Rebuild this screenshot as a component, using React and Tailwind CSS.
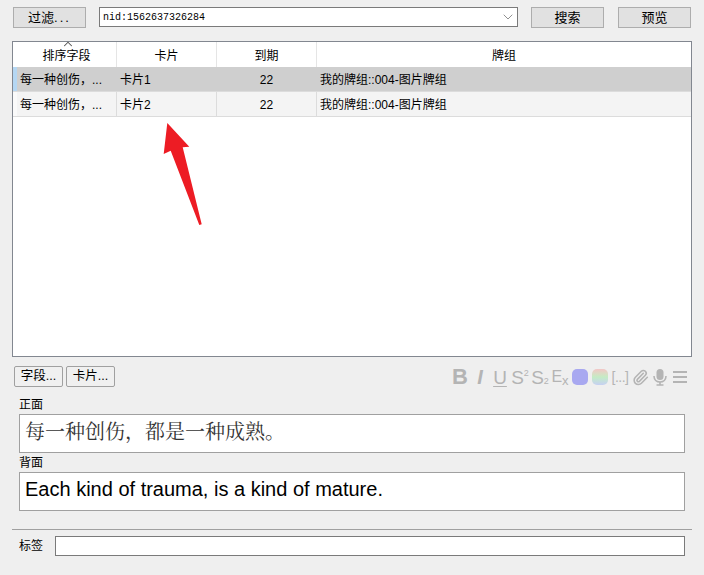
import React from "react";
import { ChevronDown, ChevronUp, Paperclip } from "lucide-react";

const rows = [
    { sort: "每一种创伤，...", card: "卡片1", due: "22", deck: "我的牌组::004-图片牌组", selected: true },
    { sort: "每一种创伤，...", card: "卡片2", due: "22", deck: "我的牌组::004-图片牌组", selected: false },
];

const TopButton = ({ children, className }) => (
    <button className={`h-[21px] border border-[#adadad] bg-[#e1e1e1] text-[13px] leading-[19px] text-black ${className}`}>
        {children}
    </button>
);

const SmallButton = ({ children }) => (
    <button className="h-[21px] w-[49px] rounded-[2px] border border-[#a0a0a0] bg-[#f0f0f0] text-[12.5px] leading-[19px] text-black">
        {children}
    </button>
);

const Cell = ({ children }) => (
    <div className="flex h-[20px] w-[20px] items-center justify-center">{children}</div>
);

const Toolbar = () => (
    <div className="mt-[2px] flex h-[20px] items-center font-['Liberation_Sans',sans-serif] text-[#b4b4b4]">
        <Cell><span className="text-[22px] leading-none font-bold">B</span></Cell>
        <Cell><span className="text-[20px] leading-none font-bold italic">I</span></Cell>
        <Cell><span className="text-[19px] leading-none underline underline-offset-2">U</span></Cell>
        <Cell>
            <span className="text-[19px] leading-none">S</span>
            <span className="mb-[8px] text-[9px] leading-none">2</span>
        </Cell>
        <Cell>
            <span className="text-[19px] leading-none">S</span>
            <span className="mt-[9px] text-[9px] leading-none">2</span>
        </Cell>
        <Cell>
            <span className="mb-[1px] text-[16px] leading-none">E</span>
            <span className="mt-[6px] text-[13px] leading-none">x</span>
        </Cell>
        <Cell><span className="h-[16px] w-[16px] rounded-[5px] bg-[#a8a8f0]"></span></Cell>
        <Cell><span className="h-[16px] w-[16px] rounded-[5px] bg-gradient-to-b from-[#f2c6c6] via-[#c4ecc4] to-[#c6d0f2]"></span></Cell>
        <Cell><span className="text-[14px] leading-none tracking-[-0.5px]">[...]</span></Cell>
        <Cell><Paperclip size={17} strokeWidth={2.2} /></Cell>
        <Cell>
            <svg width="14" height="18" viewBox="0 0 14 18" fill="none">
                <rect x="3.5" y="1" width="7" height="11" rx="3.5" fill="#b4b4b4" />
                <path d="M1 8c0 3.5 2.6 6 6 6s6-2.500 6-6" stroke="#b4b4b4" strokeWidth="1.6" />
                <path d="M7 14v3M3.500 17h7" stroke="#b4b4b4" strokeWidth="1.6" />
            </svg>
        </Cell>
        <Cell>
            <div className="flex w-[14px] flex-col gap-[3px]">
                <span className="h-[2px] bg-[#b4b4b4]"></span>
                <span className="h-[2px] bg-[#b4b4b4]"></span>
                <span className="h-[2px] bg-[#b4b4b4]"></span>
            </div>
        </Cell>
    </div>
);

const App = () => {
    return (
        <div className="relative flex h-[575px] w-[704px] flex-col overflow-hidden bg-[#efefef] px-[12px] pt-[7px] font-['Liberation_Sans','Noto_Sans_CJK_SC',sans-serif] text-black">
            <div className="flex items-start pl-[1px]">
                <TopButton className="w-[73px]">过滤<span className="tracking-[2px]">...</span></TopButton>
                <div className="ml-[13px] flex h-[20px] w-[419px] items-center justify-between border border-[#7a7a7a] bg-white pr-[1px] pl-[3px]">
                    <span className="pt-[1px] font-['Liberation_Mono','Noto_Sans_CJK_SC',monospace] text-[10px] leading-none">nid:1562637326284</span>
                    <ChevronDown size={16} strokeWidth={1.3} className="text-[#808080]" />
                </div>
                <TopButton className="ml-[13px] w-[73px]">搜索</TopButton>
                <TopButton className="ml-[14px] w-[73px]">预览</TopButton>
            </div>

            <div className="relative mt-[13px] flex h-[316px] w-[680px] flex-col border border-[#828790] bg-white">
                <div className="flex h-[25px] text-[12px]">
                    <div className="w-[4px] shrink-0"></div>
                    <div className="relative flex w-[100px] items-center justify-center border-r border-[#e5e5e5] pt-[2px]">
                        排序字段
                        <ChevronUp size={14} strokeWidth={1.8} className="absolute -top-[5px] left-[44px] text-[#505050]" />
                    </div>
                    <div className="flex w-[100px] items-center justify-center border-r border-[#e5e5e5] pt-[2px]">卡片</div>
                    <div className="flex w-[100px] items-center justify-center border-r border-[#e5e5e5] pt-[2px]">到期</div>
                    <div className="flex flex-1 items-center justify-center pt-[2px]">牌组</div>
                </div>
                {rows.map((row) => (
                    <div key={row.card} className={`flex h-[25px] border-b border-[#dcdcdc] text-[12px] ${row.selected ? "bg-[#cfcfcf]" : "bg-[#f4f4f4]"}`}>
                        <div className={`w-[4px] shrink-0 ${row.selected ? "bg-[#b5d7f3]" : "bg-[#fafafa]"}`}></div>
                        <div className={`flex w-[100px] items-center border-r pt-[1px] pl-[3px] ${row.selected ? "border-[#cfcfcf]" : "border-[#dcdcdc]"}`}>{row.sort}</div>
                        <div className={`flex w-[100px] items-center border-r pt-[1px] pl-[3px] ${row.selected ? "border-[#cfcfcf]" : "border-[#dcdcdc]"}`}>{row.card}</div>
                        <div className={`flex w-[100px] items-center justify-center border-r pt-[1px] ${row.selected ? "border-[#cfcfcf]" : "border-[#dcdcdc]"}`}>{row.due}</div>
                        <div className="flex flex-1 items-center pt-[1px] pl-[3px]">{row.deck}</div>
                    </div>
                ))}
            </div>

            <div className="mt-[8px] flex items-center justify-between pr-[2px] pl-[2px]">
                <div className="flex gap-[3px]">
                    <SmallButton>字段...</SmallButton>
                    <SmallButton>卡片...</SmallButton>
                </div>
                <Toolbar />
            </div>

            <div className="mt-[10px] flex flex-col pl-[7px]">
                <div className="h-[17px] text-[12px] leading-[17px]">正面</div>
                <div className="flex h-[39px] w-[666px] border border-[#a0a0a0] bg-white pt-[5px] pl-[5px] font-['Liberation_Serif','Noto_Serif_CJK_SC','Noto_Sans_CJK_SC',serif] text-[20px] leading-[24px] text-[#333]">
                    每一种创伤，都是一种成熟。
                </div>
                <div className="mt-[2px] h-[17px] text-[12px] leading-[17px]">背面</div>
                <div className="flex h-[39px] w-[666px] border border-[#a0a0a0] bg-white pt-[4px] pl-[5px] text-[20px] leading-[24px]">
                    Each kind of trauma, is a kind of mature.
                </div>
            </div>

            <div className="mt-[18px] h-[1px] w-[680px] bg-[#a0a0a0]"></div>

            <div className="mt-[6px] flex items-center pl-[7px]">
                <span className="w-[36px] text-[12px]">标签</span>
                <div className="h-[20px] w-[630px] border border-[#7a7a7a] bg-white"></div>
            </div>

            <svg className="absolute top-[120px] left-[160px]" width="45" height="108" viewBox="0 0 45 108">
                <polygon points="7.300,3 29.300,26.700 22.700,27.300 41.700,104.300 39.300,105 10.700,30.700 3.700,34" fill="#ed1c24" />
            </svg>
        </div>
    );
};

export default App;
